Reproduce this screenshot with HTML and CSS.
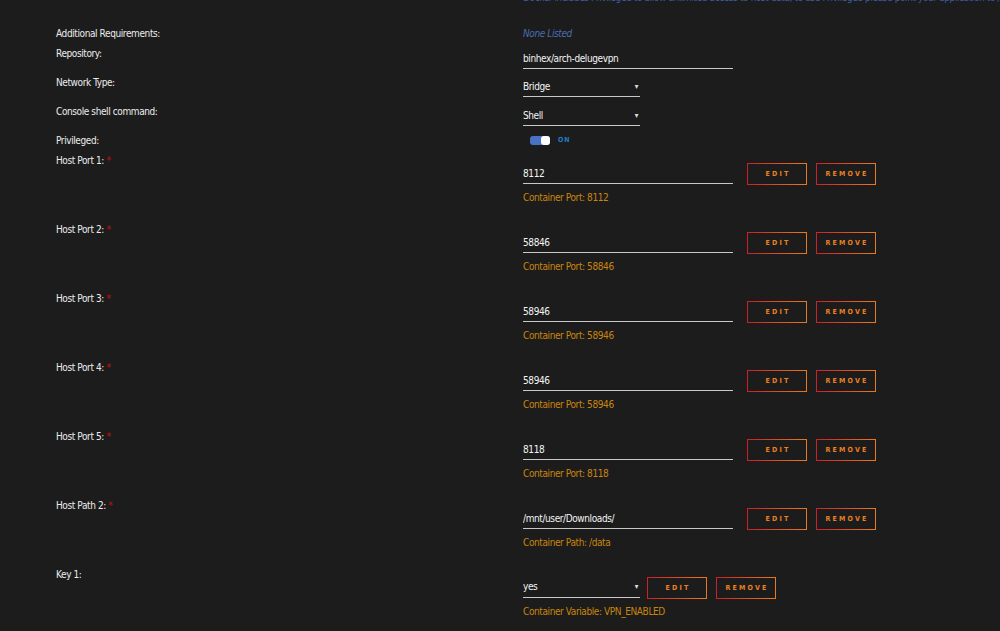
FILE: index.html
```html
<!doctype html>
<html>
<head>
<title>Update Container</title>
<meta name="viewport" content="width=device-width">
<link rel="stylesheet" href="styles.css">
</head>
<body>
<div class="form">
<div class="note">Docker includes Privileged to allow unlimited access to host data, to use Privileged please point your application to /mnt/user/appdata/ - Requirements</div>

<div class="row short first"><div class="label">Additional Requirements:</div><div class="value"><span class="none">None Listed</span></div></div>
<div class="row field"><div class="label">Repository:</div><div class="value"><input class="text" value="binhex/arch-delugevpn"></div></div>
<div class="row field"><div class="label">Network Type:</div><div class="value"><span class="select"><select><option>Bridge</option></select></span></div></div>
<div class="row field"><div class="label">Console shell command:</div><div class="value"><span class="select"><select><option>Shell</option></select></span></div></div>
<div class="row short"><div class="label">Privileged:</div><div class="value toggle"><span class="switch"><span class="knob"></span></span><span class="on">ON</span></div></div>

<div class="row port"><div class="label">Host Port 1: <span class="req">*</span></div><div class="value">
<div class="line"><input class="text" value="8112"><button class="btn">EDIT</button><button class="btn">REMOVE</button></div>
<div class="hint">Container Port: 8112</div></div></div>

<div class="row port"><div class="label">Host Port 2: <span class="req">*</span></div><div class="value">
<div class="line"><input class="text" value="58846"><button class="btn">EDIT</button><button class="btn">REMOVE</button></div>
<div class="hint">Container Port: 58846</div></div></div>

<div class="row port"><div class="label">Host Port 3: <span class="req">*</span></div><div class="value">
<div class="line"><input class="text" value="58946"><button class="btn">EDIT</button><button class="btn">REMOVE</button></div>
<div class="hint">Container Port: 58946</div></div></div>

<div class="row port"><div class="label">Host Port 4: <span class="req">*</span></div><div class="value">
<div class="line"><input class="text" value="58946"><button class="btn">EDIT</button><button class="btn">REMOVE</button></div>
<div class="hint">Container Port: 58946</div></div></div>

<div class="row port"><div class="label">Host Port 5: <span class="req">*</span></div><div class="value">
<div class="line"><input class="text" value="8118"><button class="btn">EDIT</button><button class="btn">REMOVE</button></div>
<div class="hint">Container Port: 8118</div></div></div>

<div class="row port"><div class="label">Host Path 2: <span class="req">*</span></div><div class="value">
<div class="line"><input class="text" value="/mnt/user/Downloads/"><button class="btn">EDIT</button><button class="btn">REMOVE</button></div>
<div class="hint">Container Path: /data</div></div></div>

<div class="row port"><div class="label">Key 1:</div><div class="value">
<div class="line"><span class="select"><select><option>yes</option></select></span><button class="btn">EDIT</button><button class="btn">REMOVE</button></div>
<div class="hint">Container Variable: VPN_ENABLED</div></div></div>
</div>
</body>
</html>
```
FILE: styles.css
```css
html, body {margin:0; padding:0; background:#1c1c1c; overflow:hidden}
body {color:#ececec; font:10px "DejaVu Sans Condensed",sans-serif; letter-spacing:-0.4px}
.form {padding-left:56px}
.note {margin:-9px 0 0 467px; line-height:14px; white-space:nowrap; color:#3a5fa8; overflow:hidden}
.row {display:flex; line-height:14px}
.row.first {margin-top:22px}
.label {width:467px; flex:none}
.req {color:#c01010}
.row.short {height:20px}
.row.field {height:29px}
.row.field .value {padding-top:1px}
.row.port {height:69px}
.row.port .value {padding-top:9px}
.none {color:#4a6cb0; font-style:italic}
input, select, button {font:inherit; color:inherit; letter-spacing:inherit; margin:0}
.text {width:210px; height:21px; box-sizing:border-box; padding:0; background:none; border:0; border-bottom:1px solid #c8c8c8; color:#f4f4f4; outline:none}
.select {position:relative; display:inline-block}
.select select {-webkit-appearance:none; appearance:none; width:117px; height:20px; box-sizing:border-box; padding:0; background:none; border:0; border-bottom:1px solid #c8c8c8; color:#f4f4f4; outline:none}
.select::after {content:"\25BE"; position:absolute; right:2px; top:3px; font-size:8px; color:#ddd; pointer-events:none}
.row.port .select select {height:21px}
.line {display:flex; align-items:flex-start}
.btn {width:60px; height:22px; margin-left:9px; background:transparent; color:#ec8022; font-size:7px; font-weight:bold; letter-spacing:2.2px; padding:0 0 0 2px; border:1px solid; border-image:linear-gradient(90deg,#cc1f2a,#ea7a1c) 1}
.text + .btn {margin-left:14px}
.select + .btn {margin-left:7px}
.hint {margin-top:6px; color:#c9850c}
.value.toggle {display:flex; align-items:center; height:12px}
.switch {margin-left:7px; width:20px; height:9px; border-radius:3px; background:#4a72c4; position:relative}
.knob {position:absolute; right:0; top:0; width:9px; height:9px; border-radius:3px; background:#fff}
.on {margin-left:8px; color:#1f7cc4; font-size:7px; font-weight:bold; letter-spacing:1px}
```
